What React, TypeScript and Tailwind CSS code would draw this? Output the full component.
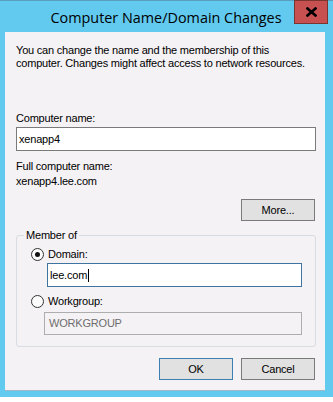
import React from "react";

const body = { fontFamily: '"Liberation Sans", Arial, sans-serif' };

function Radio({ checked }: { checked?: boolean }) {
  return (
    <div className="w-[13px] h-[13px] rounded-full border border-[#333333] bg-[#fbfbfb] flex items-center justify-center shrink-0">
      {checked && <div className="w-[5px] h-[5px] rounded-full bg-[#111111]" />}
    </div>
  );
}

export default function App() {
  return (
    <div className="w-[333px] h-[402px] bg-white overflow-hidden" style={body}>
      <div className="w-[333px] h-[397px] bg-[#62c9ef] border-t border-[#5a9ec0] flex flex-col">
        {/* title bar */}
        <div className="relative h-[31px] flex items-center justify-center">
          <span
            className="text-[14.4px] text-black leading-none mt-[4px] pr-[1px] whitespace-nowrap"
            style={{ fontFamily: '"Open Sans", "Noto Sans", sans-serif' }}
          >
            Computer Name/Domain Changes
          </span>
          <div className="absolute left-[294px] -top-[1px] w-[34px] h-[24px] bg-[#c75050] border border-[#7c3431] flex items-center justify-center">
            <svg width="11" height="10" viewBox="0 0 11 10">
              <path d="M1.5 1.5 L9.5 8.5 M9.5 1.5 L1.5 8.5" stroke="#000" strokeWidth="2.6" strokeLinecap="square" />
            </svg>
          </div>
        </div>
        {/* client area */}
        <div className="ml-[5px] w-[320px] h-[359px] bg-[#f5f2f5] border-b border-[#9fb7c6] flex flex-col pl-[11px] pr-[9px] text-[11px] leading-[13px] text-black tracking-[-0.2px]">
          <p className="mt-[12px] whitespace-nowrap">
            You can change the name and the membership of this
            <br />
            computer. Changes might affect access to network resources.
          </p>
          <p className="mt-[42px]">Computer name:</p>
          <div className="mt-[2px] h-[24px] bg-white border border-[#7a7a7a] flex items-center pl-[2px]">
            xenapp4
          </div>
          <p className="mt-[9px]">Full computer name:</p>
          <p className="mt-[2px]">xenapp4.lee.com</p>
          <div className="mt-[11px] flex justify-end pr-[1px]">
            <div className="w-[74px] h-[22px] bg-[#e1e1e1] border border-[#7a7a7a] flex items-center justify-center">
              More...
            </div>
          </div>
          {/* group */}
          <div className="relative mt-[14px] h-[112px] border border-[#d7dde2] rounded-[3px] pl-[14px] flex flex-col">
            <span className="absolute -top-[7px] left-[7px] px-[2px] bg-[#f5f2f5]">Member of</span>
            <div className="mt-[12px] flex items-center gap-[4px] h-[13px]">
              <Radio checked />
              <span>Domain:</span>
            </div>
            <div className="mt-[2px] ml-[16px] w-[255px] h-[24px] bg-white border border-[#3f73a0] flex items-center pl-[2px]">
              lee.com
              <span className="inline-block w-[1px] h-[13px] bg-black ml-[1px]" />
            </div>
            <div className="mt-[8px] flex items-center gap-[4px] h-[13px]">
              <Radio />
              <span>Workgroup:</span>
            </div>
            <div className="mt-[4px] ml-[13px] w-[258px] h-[23px] bg-[#f5f2f5] border border-[#adadad] flex items-center pl-[4px] text-[#6d6d6d]">
              WORKGROUP
            </div>
          </div>
          <div className="mt-[11px] flex justify-end gap-[8px] pr-[1px]">
            <div className="w-[74px] h-[22px] bg-[#e1e1e1] border border-[#3c7fb1] flex items-center justify-center">
              OK
            </div>
            <div className="w-[74px] h-[22px] bg-[#e1e1e1] border border-[#7a7a7a] flex items-center justify-center">
              Cancel
            </div>
          </div>
        </div>
      </div>
    </div>
  );
}
